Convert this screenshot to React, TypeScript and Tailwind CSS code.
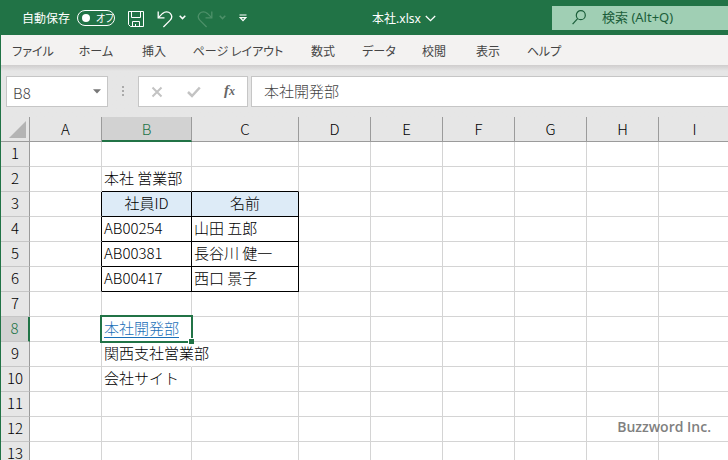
import { useState } from "react";
import clsx from "clsx";

// ====================================
// TYPES
// ====================================

type Column = {
  name: string;
  width: string;
};

type MenuItem = {
  label: string;
  width: string;
};

// ====================================
// DATA
// ====================================

const MENU: MenuItem[] = [
  { label: "ファイル", width: "w-[64px]" },
  { label: "ホーム", width: "w-[62px]" },
  { label: "挿入", width: "w-[54px]" },
  { label: "ページ レイアウト", width: "w-[114px]" },
  { label: "数式", width: "w-[56px]" },
  { label: "データ", width: "w-[56px]" },
  { label: "校閲", width: "w-[54px]" },
  { label: "表示", width: "w-[54px]" },
  { label: "ヘルプ", width: "w-[58px]" },
];

const COLUMNS: Column[] = [
  { name: "A", width: "w-[72px]" },
  { name: "B", width: "w-[90px]" },
  { name: "C", width: "w-[107px]" },
  { name: "D", width: "w-[72px]" },
  { name: "E", width: "w-[72px]" },
  { name: "F", width: "w-[72px]" },
  { name: "G", width: "w-[72px]" },
  { name: "H", width: "w-[72px]" },
  { name: "I", width: "w-[72px]" },
];

const ROWS = [1, 2, 3, 4, 5, 6, 7, 8, 9, 10, 11, 12, 13];

const CELLS: Record<string, string> = {
  B2: "本社 営業部",
  B3: "社員ID",
  C3: "名前",
  B4: "AB00254",
  C4: "山田 五郎",
  B5: "AB00381",
  C5: "長谷川 健一",
  B6: "AB00417",
  C6: "西口 景子",
  B8: "本社開発部",
  B9: "関西支社営業部",
  B10: "会社サイト",
};

const SELECTED = { column: "B", row: 8 };

// ====================================
// ICONS
// ====================================

function SaveIcon() {
  return (
    <svg width="16" height="16" viewBox="0 0 16 16" fill="none" stroke="currentColor">
      <path d="M.5.5h15v15H2.5l-2-2z" />
      <path d="M3.5.5v6h9v-6M4.5 15.5v-5h7v5M7.5 15.5v-2.5" />
    </svg>
  );
}

function UndoIcon() {
  return (
    <svg width="16" height="17" viewBox="0 0 16 17" fill="none" stroke="currentColor" strokeWidth="1.3">
      <path d="M1.2.5v6.3h6.3" />
      <path d="M1.4 6.6 5.6 2.4C8 .2 11.4.3 13.3 2.4c1.9 2.2 1.7 5-.3 7L6.4 16" />
    </svg>
  );
}

function Chevron() {
  return (
    <svg width="7" height="5" viewBox="0 0 7 5" fill="none" stroke="currentColor" strokeWidth="1.5">
      <path d="M.7.8 3.5 3.6 6.3.8" />
    </svg>
  );
}

// ====================================
// TITLE BAR
// ====================================

function TitleBar() {
  const [autoSave, setAutoSave] = useState(false);

  return (
    <header className="flex h-[35px] shrink-0 items-center bg-[#217346] text-xs text-white">
      <div className="flex w-[256px] shrink-0 items-center pl-[22px]">
        <label className="flex items-center gap-[7px] whitespace-nowrap">
          自動保存
          <input
            type="checkbox"
            checked={autoSave}
            onChange={(e) => setAutoSave(e.target.checked)}
            className="peer sr-only"
          />
          <span className="flex h-4 w-[38px] items-center gap-[6px] rounded-full border border-white pl-1 text-[10px] leading-none peer-checked:flex-row-reverse">
            <span className="size-2 rounded-full bg-white" />
            <span className="[font-feature-settings:'palt']">
              {autoSave ? "オン" : "オフ"}
            </span>
          </span>
        </label>
        <button type="button" aria-label="上書き保存" className="ml-[13px] pt-[2px]">
          <SaveIcon />
        </button>
        <button type="button" aria-label="元に戻す" className="ml-[13px] flex items-center gap-[6px]">
          <span className="mt-[3px]">
            <UndoIcon />
          </span>
          <Chevron />
        </button>
        <button
          type="button"
          aria-label="やり直し"
          disabled
          className="ml-[11px] flex items-center gap-[6px] text-[#4d9069]"
        >
          <span className="mt-[3px] -scale-x-100">
            <UndoIcon />
          </span>
          <Chevron />
        </button>
        <button type="button" aria-label="クイック アクセス ツール バーのカスタマイズ" className="ml-[13px]">
          <svg width="8" height="8" viewBox="0 0 8 8" fill="none" stroke="currentColor" strokeWidth="1.2">
            <path d="M.5 1h7M1.2 3.6h5.6L4 6.6z" />
          </svg>
        </button>
      </div>

      <button
        type="button"
        className="flex flex-1 items-center justify-center gap-1 pt-[2px] font-['Noto_Sans','Noto_Sans_CJK_JP',sans-serif]"
      >
        本社.xlsx
        <svg width="11" height="7" viewBox="0 0 11 7" fill="none" stroke="currentColor" strokeWidth="1.3">
          <path d="M.8 1 5.5 5.6 10.2 1" />
        </svg>
      </button>

      <label className="flex h-6 w-44 shrink-0 items-center gap-4 bg-[#a0cfb4] pl-5 text-[#1b5e3a]">
        <svg width="14" height="15" viewBox="0 0 14 15" fill="none" stroke="currentColor" strokeWidth="1.2" className="shrink-0">
          <circle cx="8.8" cy="5.2" r="4.5" />
          <path d="M5.6 8.6.6 14.2" />
        </svg>
        <input
          type="text"
          aria-label="検索"
          placeholder="検索 (Alt+Q)"
          className="w-full min-w-0 bg-transparent font-['Noto_Sans','Noto_Sans_CJK_JP',sans-serif] text-[13px] outline-none placeholder:text-[#1b5e3a]"
        />
      </label>
    </header>
  );
}

// ====================================
// MENU BAR
// ====================================

function MenuBar() {
  return (
    <nav className="flex h-[30px] shrink-0 bg-[#f3f2f1] pt-px text-xs text-[#444]">
      {MENU.map((item) => (
        <button
          key={item.label}
          type="button"
          className={clsx(
            "flex shrink-0 items-center justify-center whitespace-nowrap [font-feature-settings:'palt']",
            item.width
          )}
        >
          {item.label}
        </button>
      ))}
    </nav>
  );
}

// ====================================
// FORMULA BAR
// ====================================

function FormulaBar() {
  const [value, setValue] = useState(CELLS.B8);

  return (
    <div className="flex shrink-0 bg-linear-to-b from-[#cfcdcd] to-[#e6e6e6] to-[6px] pt-[11px] pb-[10px] pl-[5px] text-[15px] font-light text-[#444]">
      <div className="flex h-[31px] w-[102px] shrink-0 items-center border border-[#c6c6c6] bg-white">
        <input
          type="text"
          aria-label="名前ボックス"
          defaultValue="B8"
          className="w-full min-w-0 pt-1 pl-[6px] outline-none"
        />
        <button type="button" aria-label="名前の一覧" className="px-[6px]">
          <svg width="8" height="5" viewBox="0 0 8 5" fill="#777">
            <path d="M0 .3h8L4 4.6z" />
          </svg>
        </button>
      </div>

      <svg width="30" height="31" viewBox="0 0 30 31" fill="#aaa" className="shrink-0">
        <path d="M14 10h2v2h-2zM14 14h2v2h-2zM14 18h2v2h-2z" />
      </svg>

      <div className="flex h-[31px] w-[110px] shrink-0 items-center justify-between border border-[#c6c6c6] bg-white px-3">
        <button type="button" aria-label="キャンセル">
          <svg width="12" height="12" viewBox="0 0 12 12" fill="none" stroke="#c3c3c3" strokeWidth="2">
            <path d="m1.5 1.5 9 9M10.5 1.5l-9 9" />
          </svg>
        </button>
        <button type="button" aria-label="入力">
          <svg width="14" height="12" viewBox="0 0 14 12" fill="none" stroke="#c3c3c3" strokeWidth="2.5">
            <path d="m1 6 4 4L12.8 1.5" />
          </svg>
        </button>
        <button
          type="button"
          aria-label="関数の挿入"
          className="flex items-baseline pb-[2px] font-['Liberation_Serif',serif] font-bold text-[#666] italic"
        >
          f<span className="text-xs">x</span>
        </button>
      </div>

      <input
        type="text"
        aria-label="数式バー"
        value={value}
        onChange={(e) => setValue(e.target.value)}
        className="ml-[3px] h-[31px] min-w-0 flex-1 border border-r-0 border-[#c6c6c6] bg-white pb-[2px] pl-3 outline-none"
      />
    </div>
  );
}

// ====================================
// SHEET
// ====================================

function Cell({ column, row }: { column: string; row: number }) {
  const text = CELLS[column + row];
  const selected = column === SELECTED.column && row === SELECTED.row;

  // B3:C6 is the bordered list, its outline is drawn by the neighbours too
  const listRow = row >= 3 && row <= 6;
  const listColumn = column === "B" || column === "C";
  const blackRight = listRow && (listColumn || column === "A");
  const blackBottom = listColumn && row >= 2 && row <= 6;
  const header = listColumn && row === 3;
  const overflows = column === "B" && row === 9;

  return (
    <td
      className={clsx(
        "border-r border-b p-0 pb-[2px] whitespace-nowrap",
        blackRight ? "border-r-black" : overflows ? "border-r-transparent" : "border-r-[#d4d4d4]",
        blackBottom ? "border-b-black" : "border-b-[#d4d4d4]",
        header ? "bg-[#ddebf7] text-center" : "pl-[2px]",
        selected && "relative"
      )}
    >
      {selected ? (
        <>
          <a href="#B8" className="text-[#1a6fb8] underline underline-offset-3">
            {text}
          </a>
          <span className="pointer-events-none absolute -inset-0.5 border-2 border-[#217346]" />
          <span className="pointer-events-none absolute -right-[3px] -bottom-[3px] size-[6px] border-t border-l border-white bg-[#217346]" />
        </>
      ) : overflows ? (
        <div className="w-0">{text}</div>
      ) : (
        text
      )}
    </td>
  );
}

function Sheet() {
  return (
    <main className="relative flex-1 overflow-hidden bg-white">
      <table className="w-max table-fixed border-separate border-spacing-0 text-[15px] leading-5 font-light text-black">
        <colgroup>
          <col className="w-[29px]" />
          {COLUMNS.map((column) => (
            <col key={column.name} className={column.width} />
          ))}
        </colgroup>
        <thead>
          <tr className="h-[25px] bg-[#e6e6e6]">
            <th className="w-[29px] border-r border-b border-[#9b9b9b] p-0">
              <svg width="17" height="17" viewBox="0 0 17 17" fill="#b4b4b4" className="ml-2">
                <path d="M17 0v17H0z" />
              </svg>
            </th>
            {COLUMNS.map((column) => (
              <th
                key={column.name}
                scope="col"
                className={clsx(
                  "border-r p-0 font-light",
                  column.width,
                  column.name === SELECTED.column
                    ? "border-b-2 border-r-[#9b9b9b] border-b-[#217346] bg-[#d2d2d2] text-[#217346]"
                    : "border-b border-[#9b9b9b]"
                )}
              >
                {column.name}
              </th>
            ))}
          </tr>
        </thead>
        <tbody>
          {ROWS.map((row) => (
            <tr key={row} className="h-[25px]">
              <th
                scope="row"
                className={clsx(
                  "border-b border-b-[#c6c6c6] p-0 pb-[2px] font-light",
                  row === SELECTED.row
                    ? "border-r-2 border-r-[#217346] bg-[#d2d2d2] text-[#217346]"
                    : "border-r border-r-[#9b9b9b] bg-[#e6e6e6]"
                )}
              >
                {row}
              </th>
              {COLUMNS.map((column) => (
                <Cell key={column.name} column={column.name} row={row} />
              ))}
            </tr>
          ))}
        </tbody>
      </table>

      <p className="absolute right-[17px] bottom-[23px] font-['Open_Sans',sans-serif] text-sm leading-5 font-semibold text-[#808080]">
        Buzzword Inc.
      </p>
    </main>
  );
}

// ====================================
// APP
// ====================================

export default function App() {
  return (
    <div
      lang="ja"
      className="flex h-screen flex-col overflow-hidden bg-[#e6e6e6] font-['Noto_Sans_CJK_JP',sans-serif]"
    >
      <TitleBar />
      <div className="flex min-h-0 flex-1 flex-col border-l border-[#217346]">
        <MenuBar />
        <FormulaBar />
        <Sheet />
      </div>
    </div>
  );
}
